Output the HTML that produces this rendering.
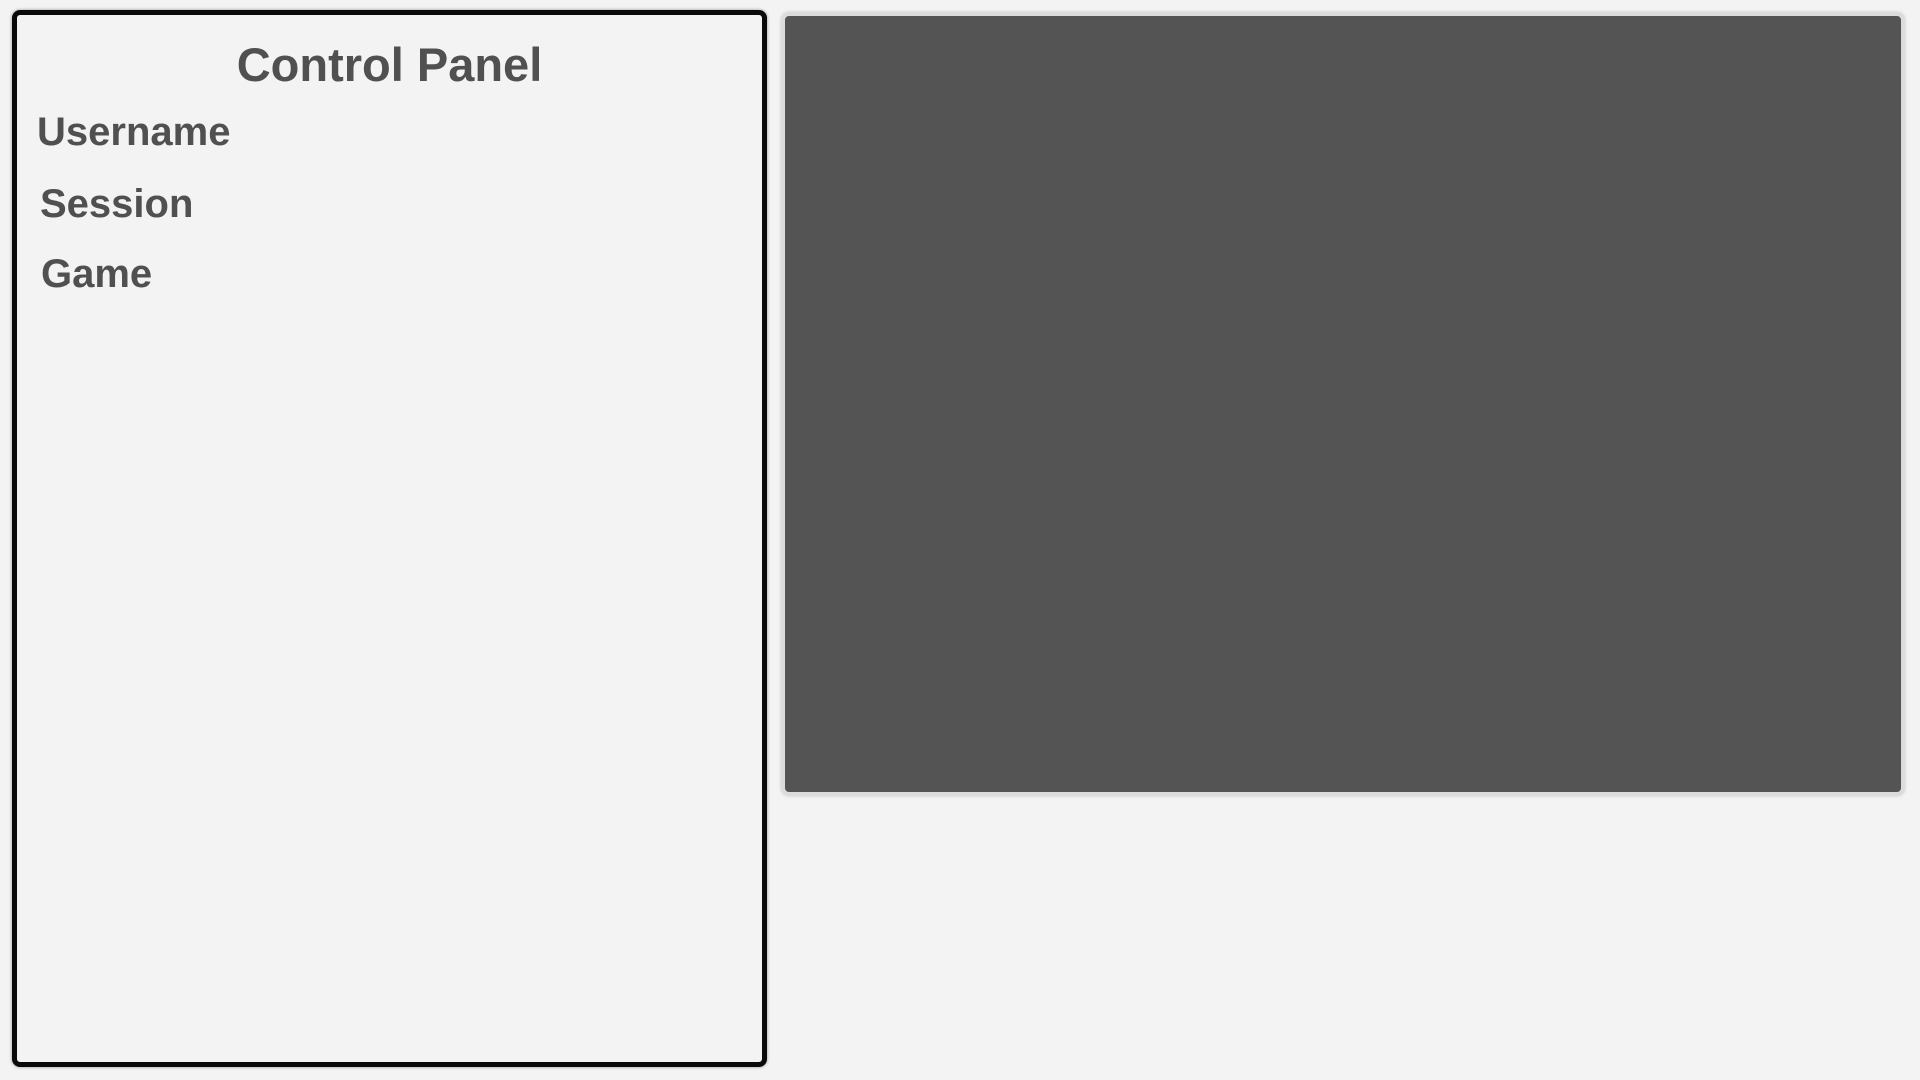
<!DOCTYPE html>
<html><head><style>
html,body{margin:0;padding:0;width:1920px;height:1080px;background:#f3f3f3;overflow:hidden;font-family:"Liberation Sans",sans-serif;}
#left{position:absolute;left:12px;top:10px;width:745px;height:1047px;border:5px solid #0a0a0a;border-radius:8px;background:#f3f3f3;box-shadow:0 0 3px rgba(0,0,0,.4);}
#title{position:absolute;left:0;width:100%;top:26px;text-align:center;font-weight:bold;font-size:47px;color:#505050;line-height:1;}
.lbl{position:absolute;font-weight:bold;font-size:40px;color:#505050;line-height:1;}
#right{position:absolute;left:781px;top:12px;width:1116px;height:776px;background:#545454;border:4px solid #dcdcdc;border-radius:8px;box-shadow:0 0 3px rgba(0,0,0,.15);}
</style></head><body>
<div id="left">
<div id="title">Control Panel</div>
<div class="lbl" style="left:20px;top:97px">Username</div>
<div class="lbl" style="left:23px;top:169px">Session</div>
<div class="lbl" style="left:24px;top:239px">Game</div>
</div>
<div id="right"></div>
</body></html>
